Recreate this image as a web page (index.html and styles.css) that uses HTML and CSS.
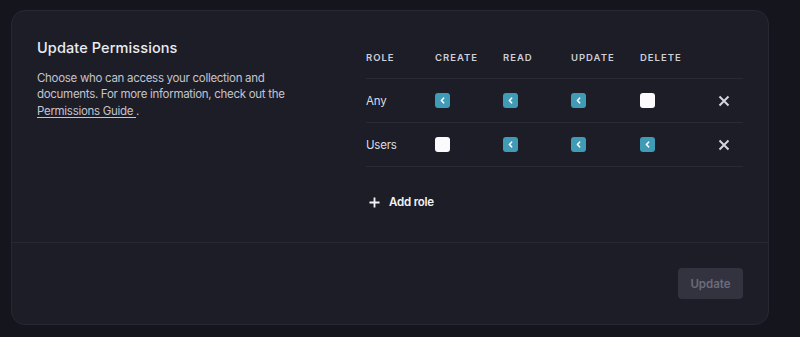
FILE: index.html
```html
<!DOCTYPE html>
<html>
<head>
  <meta charset="UTF-8">
  <title>Update Permissions</title>
  <link rel="stylesheet" href="styles.css">
</head>
<body>
<div class="card">
  <div class="card-body">
    <div class="intro">
      <h2 class="title">Update Permissions</h2>
      <p class="desc">Choose who can access your collection and documents. For more information, check out the <a href="#" class="guide">Permissions Guide </a>.</p>
    </div>
    <div class="perms">
      <div class="row head">
        <span>Role</span><span>Create</span><span>Read</span><span>Update</span><span>Delete</span><span></span>
      </div>
      <div class="row">
        <span class="role">Any</span>
        <span><i class="box on"><svg viewBox="0 0 15 15"><path d="M8.6 5.2 L6.4 7.5 L8.6 9.8"/></svg></i></span>
        <span><i class="box on"><svg viewBox="0 0 15 15"><path d="M8.6 5.2 L6.4 7.5 L8.6 9.8"/></svg></i></span>
        <span><i class="box on"><svg viewBox="0 0 15 15"><path d="M8.6 5.2 L6.4 7.5 L8.6 9.8"/></svg></i></span>
        <span><i class="box"></i></span>
        <span class="del"><svg viewBox="0 0 12 12"><path d="M1.5 1.5 L10.5 10.5 M10.5 1.5 L1.5 10.5"/></svg></span>
      </div>
      <div class="row">
        <span class="role">Users</span>
        <span><i class="box"></i></span>
        <span><i class="box on"><svg viewBox="0 0 15 15"><path d="M8.6 5.2 L6.4 7.5 L8.6 9.8"/></svg></i></span>
        <span><i class="box on"><svg viewBox="0 0 15 15"><path d="M8.6 5.2 L6.4 7.5 L8.6 9.8"/></svg></i></span>
        <span><i class="box on"><svg viewBox="0 0 15 15"><path d="M8.6 5.2 L6.4 7.5 L8.6 9.8"/></svg></i></span>
        <span class="del"><svg viewBox="0 0 12 12"><path d="M1.5 1.5 L10.5 10.5 M10.5 1.5 L1.5 10.5"/></svg></span>
      </div>
      <button class="add"><svg viewBox="0 0 12 12"><path d="M6 0.5 V11.5 M0.5 6 H11.5"/></svg>Add role</button>
    </div>
  </div>
  <div class="card-foot">
    <button class="update" disabled>Update</button>
  </div>
</div>
</body>
</html>
```

FILE: styles.css
```css
*{margin:0;padding:0;box-sizing:border-box;}
body{background:#15151d;padding:10px 31px 0 11px;font-family:Inter,"Noto Sans",sans-serif;color:#e6e6ec;}
.card{width:758px;height:315px;background:#1d1d27;border:1px solid #282834;border-radius:14px;display:flex;flex-direction:column;}
.card-body{display:grid;grid-template-columns:1fr 377px;gap:20px;padding:25px 25px 0 25px;height:232px;border-bottom:1px solid #282834;}
.title{font-size:14.5px;font-weight:500;line-height:24px;color:#ececf2;letter-spacing:0.1px;}
.desc{margin-top:10px;font-size:11.5px;line-height:16.3px;letter-spacing:-0.3px;color:#c4c4cd;width:290px;}
.guide{color:#c4c4cd;text-decoration:underline;text-underline-offset:2px;}
.row{display:grid;grid-template-columns:69px 68px 68px 69px 68px 35px;align-items:center;height:44px;border-bottom:1px solid #2a2a36;font-size:11.5px;letter-spacing:-0.2px;color:#dcdce4;}
.row.head{height:43px;font-size:9.5px;font-weight:600;letter-spacing:1px;text-transform:uppercase;color:#cfcfd8;}
.box{display:block;width:15px;height:15px;border-radius:3px;background:#fbfbfd;}
.box.on{background:#3f9bb6;}
.box svg{display:block;width:15px;height:15px;fill:none;stroke:#fff;stroke-width:1.6;stroke-linecap:round;stroke-linejoin:round;}
.del svg{display:block;width:12px;height:12px;margin-left:10px;fill:none;stroke:#d4d4dc;stroke-width:2;}
.add{display:flex;align-items:center;gap:9px;margin-top:23px;margin-left:3px;height:24px;background:none;border:0;font-family:inherit;font-size:11.5px;font-weight:600;letter-spacing:-0.2px;color:#f2f2f6;}
.add svg{width:11px;height:11px;fill:none;stroke:#f2f2f6;stroke-width:2;}
.card-foot{flex:1;display:flex;justify-content:flex-end;align-items:flex-start;padding:25px 25px 0 0;}
.update{width:65px;height:31px;border:0;border-radius:4px;background:#33333f;color:#6c6c7a;font-family:inherit;font-size:11.5px;font-weight:600;}
```
